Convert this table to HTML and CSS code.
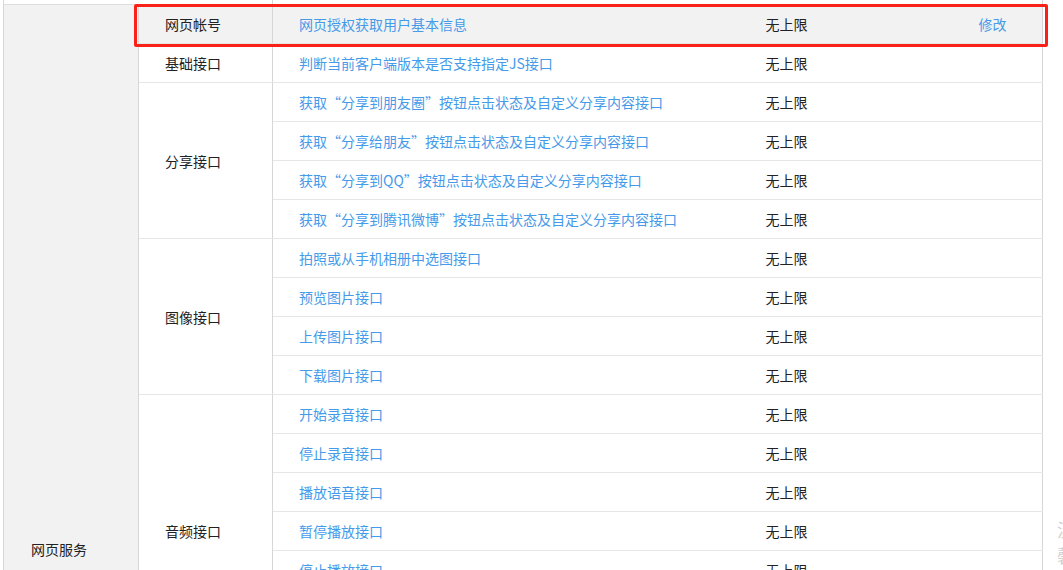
FILE: index.html
```html
<!DOCTYPE html>
<html lang="zh-CN">
<head>
  <meta charset="UTF-8">
  <meta name="viewport" content="width=device-width, initial-scale=1.0">
  <title>接口权限</title>
  <link rel="stylesheet" href="styles.css">
</head>
<body>
  <div class="page">
    <div class="table-wrap">
      <table class="perm-table">
        <colgroup>
          <col class="c-cat">
          <col class="c-group">
          <col class="c-name">
          <col class="c-limit">
          <col class="c-op">
        </colgroup>
        <tbody>
          <tr class="cut">
            <td></td><td class="grp"></td><td></td><td></td><td></td>
          </tr>
          <tr class="active">
            <td class="cat" rowspan="28">网页服务</td>
            <td class="grp">网页帐号</td>
            <td><a class="link">网页授权获取用户基本信息</a></td>
            <td>无上限</td>
            <td><a class="link">修改</a></td>
          </tr>
          <tr>
            <td class="grp">基础接口</td>
            <td><a class="link">判断当前客户端版本是否支持指定JS接口</a></td>
            <td>无上限</td><td></td>
          </tr>
          <tr>
            <td class="grp" rowspan="4">分享接口</td>
            <td><a class="link">获取“分享到朋友圈”按钮点击状态及自定义分享内容接口</a></td>
            <td>无上限</td><td></td>
          </tr>
          <tr>
            <td><a class="link">获取“分享给朋友”按钮点击状态及自定义分享内容接口</a></td>
            <td>无上限</td><td></td>
          </tr>
          <tr>
            <td><a class="link">获取“分享到QQ”按钮点击状态及自定义分享内容接口</a></td>
            <td>无上限</td><td></td>
          </tr>
          <tr>
            <td><a class="link">获取“分享到腾讯微博”按钮点击状态及自定义分享内容接口</a></td>
            <td>无上限</td><td></td>
          </tr>
          <tr>
            <td class="grp" rowspan="4">图像接口</td>
            <td><a class="link">拍照或从手机相册中选图接口</a></td>
            <td>无上限</td><td></td>
          </tr>
          <tr>
            <td><a class="link">预览图片接口</a></td>
            <td>无上限</td><td></td>
          </tr>
          <tr>
            <td><a class="link">上传图片接口</a></td>
            <td>无上限</td><td></td>
          </tr>
          <tr>
            <td><a class="link">下载图片接口</a></td>
            <td>无上限</td><td></td>
          </tr>
          <tr>
            <td class="grp" rowspan="7">音频接口</td>
            <td><a class="link">开始录音接口</a></td>
            <td>无上限</td><td></td>
          </tr>
          <tr>
            <td><a class="link">停止录音接口</a></td>
            <td>无上限</td><td></td>
          </tr>
          <tr>
            <td><a class="link">播放语音接口</a></td>
            <td>无上限</td><td></td>
          </tr>
          <tr>
            <td><a class="link">暂停播放接口</a></td>
            <td>无上限</td><td></td>
          </tr>
          <tr>
            <td><a class="link">停止播放接口</a></td>
            <td>无上限</td><td></td>
          </tr>
          <tr>
            <td><a class="link">上传语音接口</a></td>
            <td>无上限</td><td></td>
          </tr>
          <tr>
            <td><a class="link">下载语音接口</a></td>
            <td>无上限</td><td></td>
          </tr>
          <tr>
            <td class="grp">智能接口</td>
            <td><a class="link">识别音频并返回识别结果接口</a></td>
            <td>无上限</td><td></td>
          </tr>
          <tr>
            <td class="grp">设备信息</td>
            <td><a class="link">获取网络状态接口</a></td>
            <td>无上限</td><td></td>
          </tr>
          <tr>
            <td class="grp" rowspan="2">地理位置</td>
            <td><a class="link">使用微信内置地图查看位置接口</a></td>
            <td>无上限</td><td></td>
          </tr>
          <tr>
            <td><a class="link">获取地理位置接口</a></td>
            <td>无上限</td><td></td>
          </tr>
          <tr>
            <td class="grp" rowspan="7">界面操作</td>
            <td><a class="link">隐藏右上角菜单接口</a></td>
            <td>无上限</td><td></td>
          </tr>
          <tr>
            <td><a class="link">显示右上角菜单接口</a></td>
            <td>无上限</td><td></td>
          </tr>
          <tr>
            <td><a class="link">关闭当前网页窗口接口</a></td>
            <td>无上限</td><td></td>
          </tr>
          <tr>
            <td><a class="link">批量隐藏功能按钮接口</a></td>
            <td>无上限</td><td></td>
          </tr>
          <tr>
            <td><a class="link">批量显示功能按钮接口</a></td>
            <td>无上限</td><td></td>
          </tr>
          <tr>
            <td><a class="link">隐藏所有非基础按钮接口</a></td>
            <td>无上限</td><td></td>
          </tr>
          <tr>
            <td><a class="link">显示所有功能按钮接口</a></td>
            <td>无上限</td><td></td>
          </tr>
        </tbody>
      </table>
      <div class="highlight"></div>
    </div>
    <div class="side">温馨提示转载</div>
  </div>
</body>
</html>
```

FILE: styles.css
```css
html, body {
  margin: 0;
  overflow: hidden;
}
body {
  font-family: "Noto Sans CJK SC", "Noto Sans", sans-serif;
  font-size: 14px;
  color: #222;
  background: #fff;
}
.page {
  display: flex;
  align-items: flex-start;
}
.table-wrap {
  position: relative;
  margin-left: 3px;
}
.perm-table {
  width: 1039px;
  table-layout: fixed;
  border-collapse: collapse;
  border-left: 1px solid #d6d6d6;
  border-right: 1px solid #d6d6d6;
}
.c-cat { width: 135px; }
.c-group { width: 134px; }
.c-name { width: 467px; }
.c-limit { width: 213px; }
.c-op { width: 90px; }
.perm-table td {
  height: 38px;
  padding: 0 0 0 26px;
  border-bottom: 1px solid #e6e6e6;
  vertical-align: middle;
  white-space: nowrap;
  line-height: 20px;
}
.perm-table tr.cut td {
  height: 4px;
  line-height: 0;
  border-bottom-color: #dedede;
}
.perm-table td.cat {
  background: #f2f2f2;
  border-right: 1px solid #d6d6d6;
  padding-left: 27px;
  padding-bottom: 3px;
}
.perm-table td.grp {
  border-right: 1px solid #d6d6d6;
}
.perm-table tr.active td {
  background: #f2f2f2;
}
.link {
  color: #459ae9;
  text-decoration: none;
  cursor: pointer;
}
.highlight {
  position: absolute;
  left: 131px;
  top: 4px;
  width: 914px;
  height: 43px;
  box-sizing: border-box;
  border: 3px solid #fa2218;
  border-radius: 2px;
  pointer-events: none;
}
.side {
  width: 18px;
  margin-left: 14px;
  padding-top: 516px;
  font-size: 18px;
  line-height: 26px;
  color: #d0d0d0;
  white-space: normal;
}
```
